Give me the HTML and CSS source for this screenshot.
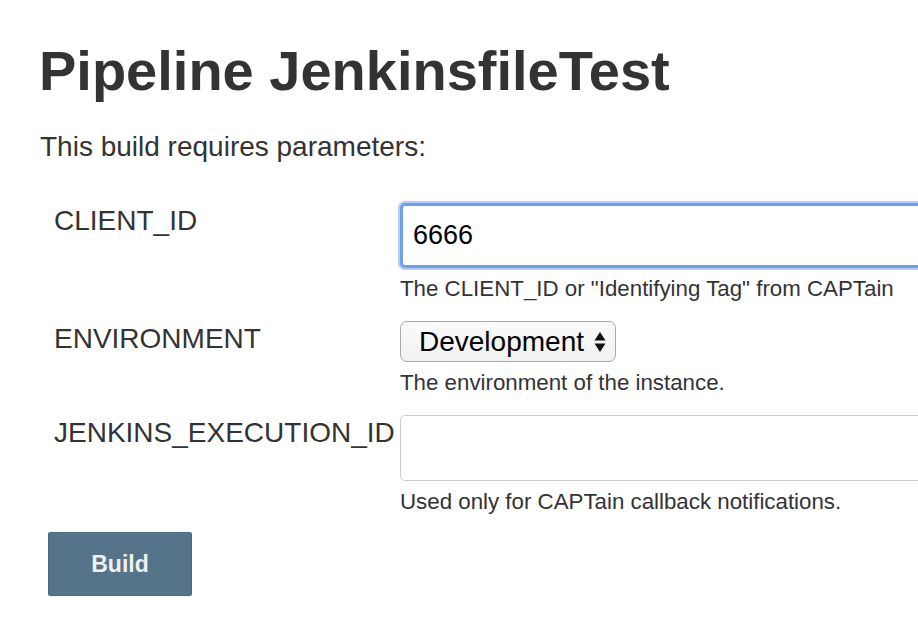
FILE: index.html
```html
<!DOCTYPE html>
<html>
<head>
<meta charset="utf-8">
<link rel="stylesheet" href="styles.css">
</head>
<body>
<div class="page">
  <h1 class="title">Pipeline JenkinsfileTest</h1>
  <p class="intro">This build requires parameters:</p>
  <div class="params">
    <div class="label">CLIENT_ID</div>
    <div class="field">
      <input class="text-input focused" type="text" value="6666">
      <div class="help">The CLIENT_ID or "Identifying Tag" from CAPTain</div>
    </div>
    <div class="label">ENVIRONMENT</div>
    <div class="field">
      <div class="select">
        <span>Development</span>
        <svg class="arrows" width="12" height="22" viewBox="0 0 12 22"><path d="M6 1 L11.5 9.5 H0.5 Z M6 21 L11.5 12.5 H0.5 Z" fill="#111"/></svg>
      </div>
      <div class="help">The environment of the instance.</div>
    </div>
    <div class="label">JENKINS_EXECUTION_ID</div>
    <div class="field">
      <input class="text-input tall" type="text" value="">
      <div class="help">Used only for CAPTain callback notifications.</div>
    </div>
  </div>
  <button class="build">Build</button>
</div>
</body>
</html>
```

FILE: styles.css
```css
html, body {
  margin: 0;
  padding: 0;
  background: #fff;
  overflow: hidden;
}
body {
  font-family: "Liberation Sans", Arial, sans-serif;
  color: #333;
}
.page {
  padding: 39px 0 0 39px;
}
.title {
  margin: 0;
  font-size: 56px;
  font-weight: bold;
  line-height: 63px;
  color: #333;
}
.intro {
  margin: 29px 0 0 1px;
  font-size: 28px;
  line-height: 31px;
}
.params {
  margin: 41px 0 0 15px;
  display: grid;
  grid-template-columns: 346px 600px;
  row-gap: 20px;
}
.label {
  font-size: 28px;
  line-height: 32px;
  padding-top: 2px;
  white-space: nowrap;
}
.field {
  display: flex;
  flex-direction: column;
  align-items: flex-start;
}
.text-input {
  box-sizing: border-box;
  width: 600px;
  height: 65px;
  border: 1px solid #ccc;
  border-radius: 5px;
  font-family: "Liberation Sans", Arial, sans-serif;
  font-size: 27px;
  color: #000;
  padding: 0 12px;
  outline: none;
  background: #fff;
}
.text-input.focused {
  border: 3px solid #6d9ff1;
  box-shadow: 0 0 0 2px #b3cdf6;
  padding-left: 10px;
}
.text-input.tall {
  height: 66px;
}
.select {
  box-sizing: border-box;
  height: 41px;
  width: 216px;
  border: 1px solid #a9a9a9;
  border-radius: 7px;
  background: linear-gradient(#fafafa, #f1f1f1);
  display: flex;
  align-items: center;
  padding: 0 10px 0 18px;
  font-size: 28px;
  color: #000;
  gap: 10px;
}
.arrows {
  flex: none;
}
.help {
  font-size: 22.3px;
  line-height: 25px;
  margin-top: 8px;
  white-space: nowrap;
}
.build {
  margin: 18px 0 0 9px;
  width: 144px;
  height: 64px;
  border: 1px solid #4c6a80;
  border-radius: 2px;
  background: #557389;
  color: #eef0f2;
  font-family: "Liberation Sans", Arial, sans-serif;
  font-weight: bold;
  font-size: 23px;
  display: block;
}
```
